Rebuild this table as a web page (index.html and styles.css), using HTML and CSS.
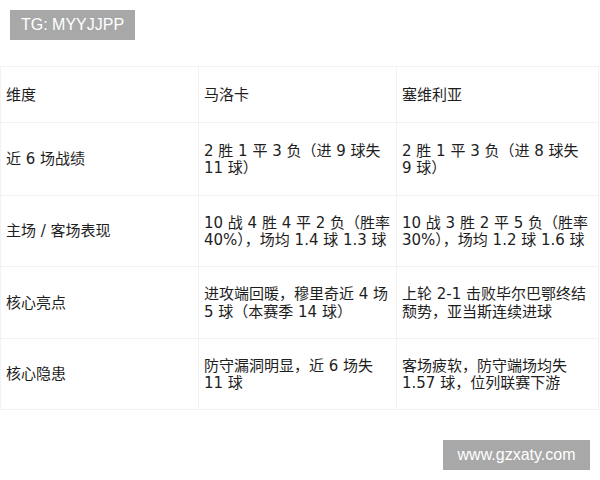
FILE: index.html
```html
<!DOCTYPE html>
<html lang="zh">
<head>
<meta charset="utf-8">
<link rel="stylesheet" href="styles.css">
</head>
<body>
<div class="page">
  <div class="tag">TG: MYYJJPP</div>
  <table class="grid">
    <colgroup><col class="c1"><col class="c2"><col class="c3"></colgroup>
    <tr class="head"><td>维度</td><td>马洛卡</td><td>塞维利亚</td></tr>
    <tr class="r73"><td>近 6 场战绩</td><td>2 胜 1 平 3 负（进 9 球失<br>11 球）</td><td>2 胜 1 平 3 负（进 8 球失<br>9 球）</td></tr>
    <tr class="r71"><td>主场 / 客场表现</td><td>10 战 4 胜 4 平 2 负（胜率<br>40%），场均 1.4 球 1.3 球</td><td>10 战 3 胜 2 平 5 负（胜率<br>30%），场均 1.2 球 1.6 球</td></tr>
    <tr class="r72"><td>核心亮点</td><td>进攻端回暖，穆里奇近 4 场<br>5 球（本赛季 14 球）</td><td>上轮 2-1 击败毕尔巴鄂终结<br>颓势，亚当斯连续进球</td></tr>
    <tr class="r71"><td>核心隐患</td><td>防守漏洞明显，近 6 场失<br>11 球</td><td>客场疲软，防守端场均失<br>1.57 球，位列联赛下游</td></tr>
  </table>
  <div class="mark">www.gzxaty.com</div>
</div>
</body>
</html>
```
FILE: styles.css
```css
html, body {
  margin: 0;
  padding: 0;
  background: #ffffff;
}
.page {
  position: relative;
  width: 600px;
  height: 480px;
  overflow: hidden;
  padding-top: 66px;
  box-sizing: border-box;
}
.tag {
  position: absolute;
  left: 10px;
  top: 10px;
  width: 125px;
  height: 30px;
  background: #a8a8a8;
  color: #ffffff;
  font-family: "Liberation Sans", Arial, sans-serif;
  font-size: 16px;
  line-height: 30px;
  text-align: center;
}
.mark {
  position: absolute;
  left: 443px;
  top: 440px;
  width: 147px;
  height: 30px;
  background: #a8a8a8;
  color: #ffffff;
  font-family: "Liberation Sans", Arial, sans-serif;
  font-size: 16px;
  line-height: 30px;
  text-align: center;
}
.grid {
  border-collapse: collapse;
  table-layout: fixed;
  width: 598px;
  font-family: "DejaVu Sans", "Noto Sans CJK SC", sans-serif;
  font-size: 15px;
  line-height: 17.5px;
  color: #1e1e1e;
}
.c1 { width: 198px; }
.c2 { width: 198px; }
.c3 { width: 202px; }
.grid td {
  border: 1px solid #f2f2f2;
  padding: 2px 5px 0;
  vertical-align: middle;
  white-space: nowrap;
  overflow: hidden;
}
.head { height: 56px; }
.r73 { height: 73px; }
.r72 { height: 72px; }
.r71 { height: 71px; }
```
